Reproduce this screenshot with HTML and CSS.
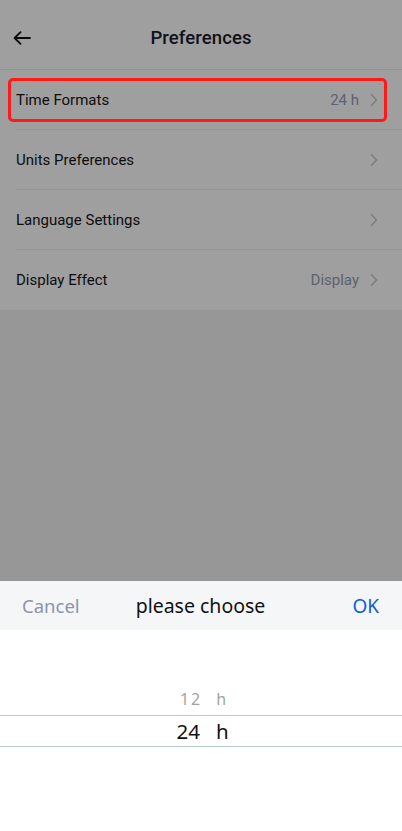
FILE: index.html
```html
<!DOCTYPE html>
<html>
<head>
<meta charset="utf-8">
<link rel="stylesheet" href="styles.css">
</head>
<body>
<div class="page">
  <header class="topbar">
    <svg class="back" width="18" height="14" viewBox="0 0 18 14"><path d="M17 7H2M7.5 1.2L1.6 7l5.9 5.8" fill="none" stroke="#111" stroke-width="1.8" stroke-linecap="round" stroke-linejoin="round"/></svg>
    <h1 class="title">Preferences</h1>
  </header>
  <ul class="list">
    <li class="row"><span class="label">Time Formats</span><span class="value">24 h</span><svg class="chev" width="8" height="14" viewBox="0 0 8 14"><path d="M1.5 1.5L6.5 7l-5 5.5" fill="none" stroke="#c4c7d2" stroke-width="1.4" stroke-linecap="round" stroke-linejoin="round"/></svg></li>
    <li class="row"><span class="label">Units Preferences</span><span class="value"></span><svg class="chev" width="8" height="14" viewBox="0 0 8 14"><path d="M1.5 1.5L6.5 7l-5 5.5" fill="none" stroke="#c4c7d2" stroke-width="1.4" stroke-linecap="round" stroke-linejoin="round"/></svg></li>
    <li class="row"><span class="label">Language Settings</span><span class="value"></span><svg class="chev" width="8" height="14" viewBox="0 0 8 14"><path d="M1.5 1.5L6.5 7l-5 5.5" fill="none" stroke="#c4c7d2" stroke-width="1.4" stroke-linecap="round" stroke-linejoin="round"/></svg></li>
    <li class="row"><span class="label">Display Effect</span><span class="value">Display</span><svg class="chev" width="8" height="14" viewBox="0 0 8 14"><path d="M1.5 1.5L6.5 7l-5 5.5" fill="none" stroke="#c4c7d2" stroke-width="1.4" stroke-linecap="round" stroke-linejoin="round"/></svg></li>
  </ul>
</div>
<div class="mask"></div>
<div class="highlight"></div>
<div class="sheet">
  <div class="sheet-head">
    <span class="cancel">Cancel</span>
    <span class="sheet-title">please choose</span>
    <span class="ok">OK</span>
  </div>
  <div class="wheel">
    <div class="opt dim"><span>12</span><span>h</span></div>
    <div class="opt sel"><span>24</span><span>h</span></div>
  </div>
</div>
</body>
</html>
```
FILE: styles.css
```css
* { box-sizing: border-box; }
html, body { margin: 0; padding: 0; }
body {
  width: 402px;
  height: 831px;
  overflow: hidden;
  background: #f3f3f3;
  font-family: Roboto, "Liberation Sans", sans-serif;
  color: #1a1a1a;
}
.topbar {
  height: 70px;
  background: #fff;
  display: flex;
  align-items: center;
  justify-content: center;
  padding-top: 7px;
  position: relative;
  border-bottom: 1px solid #ececec;
}
.back { position: absolute; left: 13px; top: 31px; }
.title {
  margin: 0;
  font-size: 18.5px;
  font-weight: 500;
  color: #1c1c2c;
  letter-spacing: 0.1px;
}
.list { list-style: none; margin: 0; padding: 0; background: #fff; }
.row {
  height: 60px;
  margin-left: 16px;
  padding-right: 24px;
  display: flex;
  align-items: center;
  border-bottom: 1px solid #efefef;
  font-size: 15px;
}
.row:last-child { border-bottom: none; }
.label { flex: 1; color: #151515; }
.value { color: #979cb5; margin-right: 11px; }
.chev { display: block; }
.mask {
  position: fixed;
  inset: 0;
  background: rgba(0, 0, 0, 0.376);
}
.highlight {
  position: absolute;
  left: 8px;
  top: 78px;
  width: 379px;
  height: 44px;
  border: 3px solid #ff1a1a;
  border-radius: 5px;
}
.sheet {
  position: fixed;
  left: 0;
  right: 0;
  bottom: 0;
  height: 250px;
  background: #fff;
  font-family: "Noto Sans", "Open Sans", sans-serif;
}
.sheet-head {
  height: 49px;
  background: #f5f6f7;
  display: grid;
  grid-template-columns: 1fr auto 1fr;
  align-items: center;
  padding: 0 23px 0 22px;
}
.cancel { font-size: 18.5px; color: #8a94ac; justify-self: start; }
.sheet-title { font-size: 19.5px; color: #111; }
.ok { font-size: 19px; color: #0a5dd6; justify-self: end; }
.wheel { padding-top: 53px; }
.opt {
  display: flex;
  justify-content: center;
  align-items: center;
}
.opt.dim {
  height: 32px;
  gap: 14px;
  font-size: 16px;
  color: #a3a3a3;
  letter-spacing: 2px;
  padding-left: 6px;
}
.opt.sel {
  height: 32px;
  gap: 16px;
  font-size: 20.5px;
  color: #111;
  border-top: 1px solid #b9c6d6;
  border-bottom: 1px solid #b9c6d6;
  padding-left: 3px;
}
```
